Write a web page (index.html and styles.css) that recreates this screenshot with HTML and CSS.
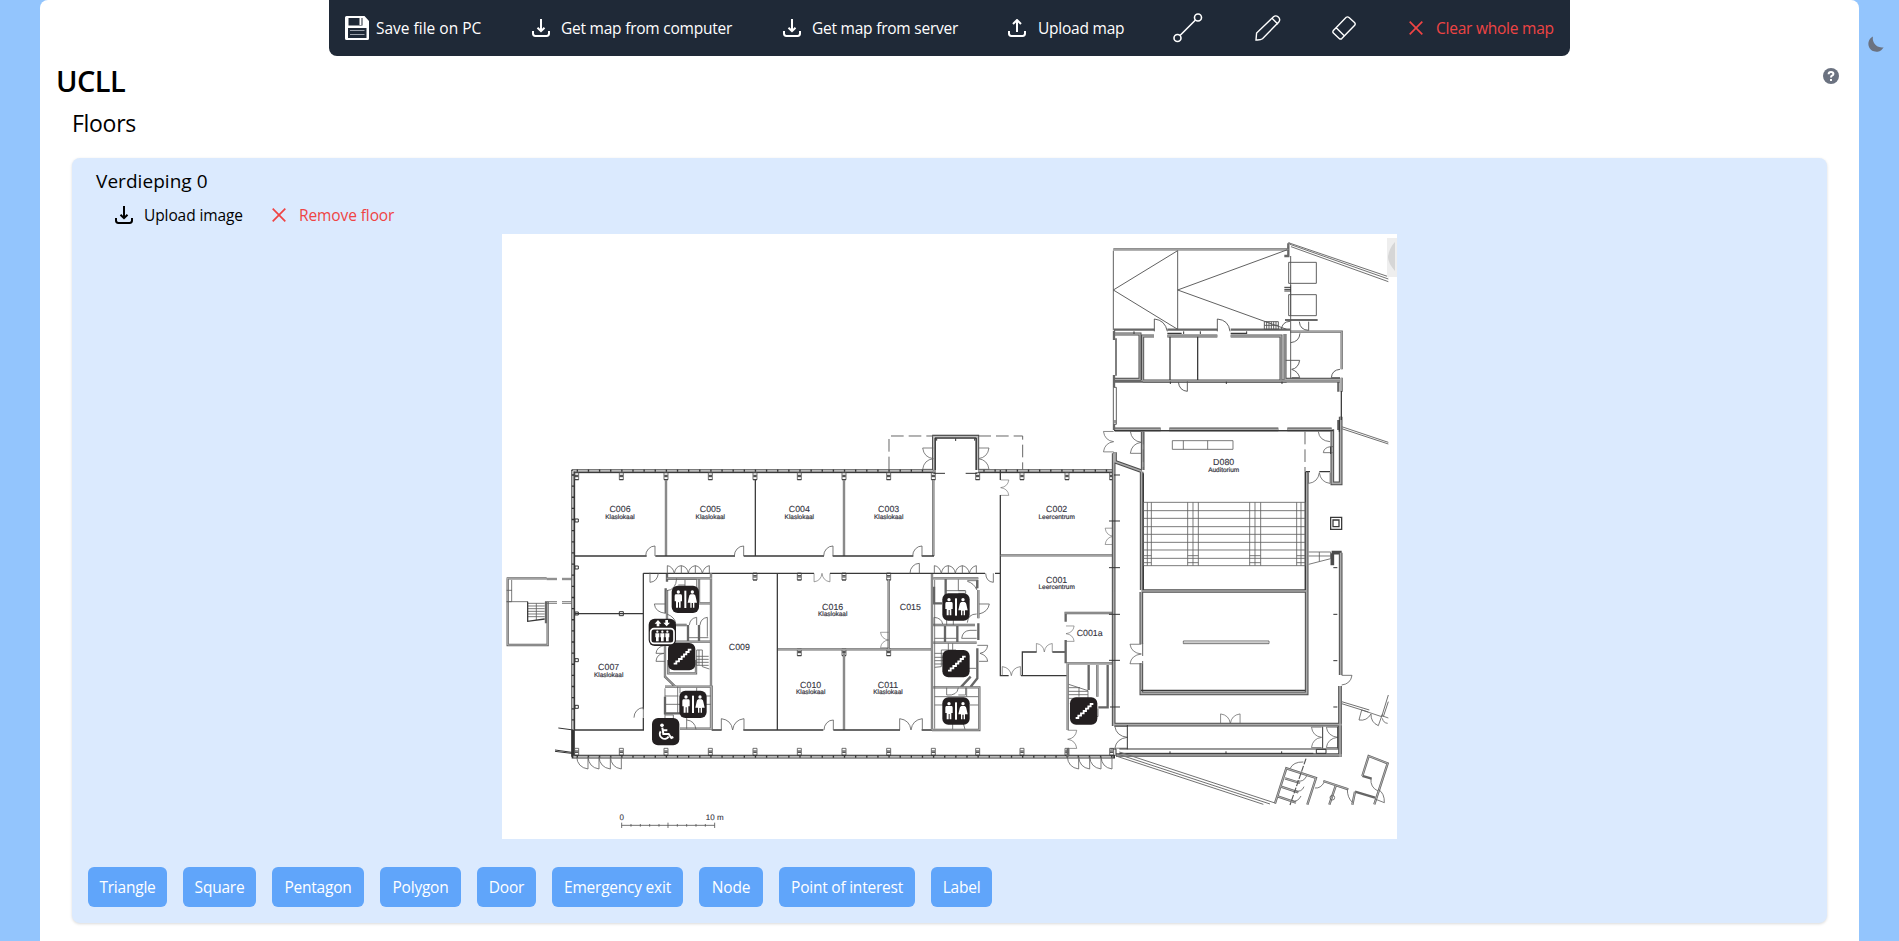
FILE: index.html
```html
<!DOCTYPE html>
<html lang="en">
<head>
<meta charset="utf-8">
<title>UCLL</title>
<link rel="stylesheet" href="styles.css">
</head>
<body>
<svg class="sprite" aria-hidden="true">
  <symbol id="download" viewBox="0 0 18 18"><path d="M9 0v12M5.500 8.700L9 12.200l3.500-3.500M1 12v2.600Q1 17 3.400 17h11.200q2.400 0 2.400-2.400V12"/></symbol>
  <symbol id="upload" viewBox="0 0 18 18"><path d="M9 13V1M5 5l4-4 4 4M1 12v2.600Q1 17 3.400 17h11.200q2.400 0 2.400-2.400V12"/></symbol>
  <symbol id="cross" viewBox="0 0 14 14"><path d="M.7.700l12.600 12.600M13.300.700L.7 13.300"/></symbol>
</svg>
<div class="page">
  <header class="toolbar">
    <button class="tool save"><svg class="disk" viewBox="0 0 24 24"><path fill="#fff" fill-rule="evenodd" d="M1.500 0H19.500L24 5V22.500Q24 24 22.500 24H1.500Q0 24 0 22.500V1.500Q0 0 1.500 0ZM3.500 2V9.500H17.500V2ZM3 12V22H21.500V12Z"/><path fill="#fff" d="M14.500 2h2v7h-2z"/><path stroke="#9ba1ab" stroke-width="1.200" d="M5 14.500h14.500M5 18.500h14.500"/></svg><span>Save file on PC</span></button>
    <button class="tool computer"><svg class="arrow"><use href="#download"/></svg><span>Get map from computer</span></button>
    <button class="tool server"><svg class="arrow"><use href="#download"/></svg><span>Get map from server</span></button>
    <button class="tool upload"><svg class="arrow"><use href="#upload"/></svg><span>Upload map</span></button>
    <button class="tool draw-line" aria-label="Line"><svg class="line-icon" viewBox="0 0 30 30"><circle cx="4.500" cy="25" r="3.500"/><circle cx="25" cy="4.500" r="3.500"/><path d="M7 22.500L22.500 7"/></svg></button>
    <button class="tool pencil" aria-label="Pencil"><svg class="pencil-icon" viewBox="0 0 26 26"><path d="M1 25l.6-7L18.500 1.800q2.300-2 4.800.3t.5 5L7.500 23.800Q5.500 25.300 1 25zM17 3.200l6 6"/></svg></button>
    <button class="tool eraser" aria-label="Eraser"><svg class="eraser-icon" viewBox="0 0 24 24"><path d="M14.200 1.300q1.400-1 2.800.2l5.500 5q1.300 1.300.2 2.800L9.800 22.600q-1.300 1-2.600-.2l-5.800-5.300q-1.100-1.300 0-2.700zM4.200 11.800l7.800 7.800"/></svg></button>
    <button class="tool clear"><svg class="cross"><use href="#cross"/></svg><span>Clear whole map</span></button>
  </header>
  <button class="theme" aria-label="Dark mode"><svg viewBox="0 0 16 16"><path d="M5 .5A9 9 0 0 0 15.600 11.200 8 8 0 1 1 5 .5z"/></svg></button>
  <main class="panel">
    <div class="title-row">
      <h1>UCLL</h1>
      <svg class="help" viewBox="0 0 16 16"><circle cx="8" cy="8" r="8" fill="#6b7280"/><path fill="none" stroke="#fff" stroke-width="2" d="M5.600 6.200Q5.700 4 8 4t2.400 1.900Q10.400 7 9 7.700 8 8.200 8 9.500"/><path fill="#fff" d="M7 11h2v2H7z"/></svg>
    </div>
    <h2>Floors</h2>
    <section class="floor">
      <h3>Verdieping 0</h3>
      <div class="floor-actions">
        <button class="action"><svg class="arrow"><use href="#download"/></svg><span>Upload image</span></button>
        <button class="action remove"><svg class="cross"><use href="#cross"/></svg><span>Remove floor</span></button>
      </div>
      <svg class="plan" viewBox="502 234 895 605">
        <defs>
          <g id="col"><path class="gray" d="M-6 0h12v21h-12z"/><path class="dark" d="M-5 8H5M-5 12H5M-6 21H6"/></g>
          <path id="door" class="fine" d="M0 0V-30A28 30 0 0 0 -28 0"/>
          <path id="pair" class="fine" d="M-34 0V-34Q-4-30 0 0Q4-30 34-34V0"/>
          <path id="arcs" class="fine" d="M0 0V-23Q16-21 21 0Q25-22 42-23Q60-20 63 0Q66-20 84-23Q101-20 105 0Q110-20 126-23V0M42-23V0M84-23V0"/>
          <path id="outdoors" class="fine" d="M0 0Q2 32 34 37V0Q36 32 67 37V0Q69 32 101 37V0Q103 32 134 37V0"/>
          <g id="badge"><rect x="-41" y="-41" width="82" height="82" rx="18" fill="#231f20"/></g>
          <g id="wc"><use href="#badge"/><g fill="#fff"><path d="M-3-26h6v52h-6z"/><circle cx="-21" cy="-22" r="5"/><path d="M-29-15h16q3 1 3 5V6h-4V25h-5V9h-3V25h-6V6h-4V-10q0-4 3-5z"/><circle cx="21" cy="-22" r="5"/><path d="M16-15h10q5 2 5 7l4 18h-8v15h-4V11h-4V25h-4V10H7l4-18q0-5 5-7z"/></g></g>
          <g id="stairs"><use href="#badge"/><path d="M-24 21h8v-7h8V7h8V0h7V-7h7v-7h7v-7h8" fill="none" stroke="#fff" stroke-width="5.500"/></g>
        </defs>
        <g transform="translate(500 420) scale(.33333)">
          <!-- outer walls of block C -->
          <path class="facade" d="M215 153H1300M1435 153H1842M219 150V1010M215 1010H1845"/>
          <path class="fill" d="M218 152H1300M1435 152H1842M218 153V930M220 1010H1840"/>
          <path class="ticks" d="M230 152H1300M1450 152H1840M219 163V920M230 1010H1840"/>
          <path class="dark" d="M224 155V930M222 158H1300M1435 158H1842"/>
          <g>
            <use href="#col" x="230" y="158"/><use href="#col" x="364" y="158"/><use href="#col" x="498" y="158"/><use href="#col" x="631" y="158"/><use href="#col" x="765" y="158"/><use href="#col" x="898" y="158"/><use href="#col" x="1032" y="158"/><use href="#col" x="1166" y="158"/><use href="#col" x="1300" y="158"/><use href="#col" x="1433" y="158"/><use href="#col" x="1566" y="158"/><use href="#col" x="1701" y="158"/><use href="#col" x="1835" y="158"/>
            <use href="#col" x="230" y="985"/><use href="#col" x="364" y="985"/><use href="#col" x="498" y="985"/><use href="#col" x="631" y="985"/><use href="#col" x="765" y="985"/><use href="#col" x="898" y="985"/><use href="#col" x="1032" y="985"/><use href="#col" x="1166" y="985"/><use href="#col" x="1300" y="985"/><use href="#col" x="1433" y="985"/><use href="#col" x="1566" y="985"/><use href="#col" x="1701" y="985"/><use href="#col" x="1835" y="985"/>
            <use href="#col" x="765" y="459"/><use href="#col" x="898" y="459"/><use href="#col" x="1032" y="459"/><use href="#col" x="1166" y="459"/><use href="#col" x="898" y="686"/><use href="#col" x="1032" y="686"/><use href="#col" x="1166" y="686"/>
          </g>
          <path class="dark" d="M225 297h10v9h-10zM225 438h10v9h-10zM225 576h10v9h-10zM225 716h10v9h-10zM225 856h10v9h-10zM358 575h12v12h-12z"/>
          <!-- rooms -->
          <path class="wall" d="M498 180V408M1032 180V408M1300 180V408M832 688H1295M1032 700V930M1166 478V688"/>
          <path class="wallfill" d="M498 180V408M1032 180V408M1300 180V408M832 688H1295M1032 700V930M1166 478V688"/>
          <path class="wall2" d="M766 180V408M222 408H440M466 408H705M731 408H972M998 408H1240M1265 408H1302M222 581H430M222 930H432M635 930H665M730 930H970M1000 930H1200M1265 930H1438M430 460H942M990 460H1455M1485 460H1500M832 460V930M430 460V868M430 893V930M1501 150V180M1501 225V767H1526M1563 767H1700M1567 767V696H1610M1657 696H1697"/>
          <path class="wall" d="M1502 406H1840"/><path class="wallfill" d="M1502 406H1840"/>
          <use href="#door" x="465" y="408"/><use href="#door" x="731" y="408"/><use href="#door" x="999" y="408"/><use href="#door" x="1266" y="408"/><use href="#door" x="1258" y="460"/><use href="#door" x="1000" y="930"/><use href="#door" x="430" y="893"/>
          <use href="#pair" transform="translate(698 930)"/><use href="#pair" transform="translate(1233 930)"/>
          <use href="#pair" transform="translate(966 460) scale(.7 -.75)"/><use href="#pair" transform="translate(1534 767) scale(.8)"/><use href="#pair" transform="translate(1633 696) scale(.7 .75)"/>
          <use href="#pair" transform="translate(1502 203) rotate(90) scale(.68 .72)"/><use href="#pair" transform="translate(1166 660) rotate(-90) scale(.68 .72)"/>
          <use href="#pair" transform="translate(1840 349) rotate(-90) scale(.72)"/>
          <path class="fine" d="M450 458V487Q472 485 475 460M1457 460Q1458 485 1480 487V460"/>
          <use href="#arcs" x="502" y="460"/><use href="#arcs" x="1303" y="460"/>
          <use href="#outdoors" x="230" y="1010"/><use href="#outdoors" x="1702" y="1010"/>
          <!-- entrance -->
          <path class="facade" d="M1302 150V50H1432V150"/><path class="fill" d="M1302 150V50H1432V150"/>
          <path class="dark" d="M1305 158V54H1429V150M1310 55v7M1367 55v8M1424 55v7M1300 160H1335M1397 160H1432"/>
          <path class="dash" d="M1167 148V48H1300M1435 48H1568V150"/>
          <use href="#pair" transform="translate(1300 116) rotate(-90) scale(.94)"/><use href="#pair" transform="translate(1435 116) rotate(90) scale(.94)"/>
          <!-- left annex -->
          <path class="wall" d="M20 475H140M23 475V675H143V545M138 545V610"/><path class="wallfill" d="M20 475H140M23 475V675H143V545"/>
          <path class="fine" d="M35 480V545H20M20 511H36M140 475H171M140 479H171M186 475H215M186 479H215M135 545H171M135 550H171M186 545H215M186 550H215M84 550H134M84 558H134M84 566H134M84 574H134M84 582H134M84 590H134M109 550V600M20 545H84"/>
          <path class="wall2" d="M83 545V604L134 597"/>
          <path class="dark" d="M175 924L220 930M165 990L222 998M165 994L222 1001M217 930V1010"/>
          <!-- left service core -->
          <path class="wall" d="M500 475H635M633 460V930M501 462V485M497 505V580M501 510V615H560M597 478V550H630M501 665H630M495 800H635V926H540M495 830V880H540M495 640V770L528 802M505 720V760H588V720M564 615V665M597 615V665"/>
          <path class="wallfill" d="M500 475H635M633 460V930M501 510V615H560M597 478V550H630M501 665H630M495 800H635V926H540M495 640V770L528 802M505 720V760H588V720"/>
          <path class="fine" d="M495 805V926M533 800V880M495 828H535M495 853H540M560 850V926M500 478H590V550M555 480V520M530 475Q528 510 500 512M535 495H555M497 552H463Q466 577 497 580M501 582Q525 592 527 610M568 615Q570 595 590 592V615M600 615Q602 595 622 592V650M565 653H597M600 653H625M590 690V735M597 690V735M588 709H626M588 718H626M588 727H626M588 736H626M607 690V740L628 747M590 690H607M495 676Q470 680 468 700H492M495 724H468Q470 702 492 700M495 885H520V900M560 900Q584 902 588 928M540 803V820M590 803V820M600 828H632M600 853H632"/>
          <!-- right service core -->
          <path class="wall" d="M1296 462V930M1300 475H1435M1302 500V550H1326M1300 615H1425M1300 668H1430M1337 478V550M1300 802H1438V930H1296M1412 770L1382 802M1432 480V505M1435 510V595M1435 610V660M1432 685V775L1412 800M1372 615V668M1335 615V668"/>
          <path class="wallfill" d="M1296 462V930M1300 475H1435M1300 615H1425M1300 668H1430M1300 802H1438V930H1296M1435 510V595"/>
          <path class="fine" d="M1304 480V926M1337 512H1395M1375 478V512H1397V520H1375M1402 484Q1422 490 1430 509V482H1402M1437 552H1468Q1464 576 1437 582M1302 616V592Q1325 594 1328 612M1340 615V597H1360V615M1402 608Q1404 582 1430 582M1304 655H1370M1430 655H1385Q1388 632 1410 631H1430M1432 676H1463Q1461 696 1440 700Q1461 706 1463 724H1437M1304 700H1328M1304 712H1328M1304 722H1328M1304 732H1328M1304 742L1324 740V690H1368M1345 670V690M1358 670V690M1405 745H1428M1375 803Q1372 828 1340 825V803M1375 825H1397V803M1304 830H1435M1304 855H1345M1410 855H1435M1358 910V928M1390 910L1395 928M1400 803V830"/>
          <!-- stair hall and C001a -->
          <path class="wall" d="M1697 575V605M1697 660V730M1695 579H1840M1700 730H1840M1703 730V930M1703 985V1010M1766 735V810M1792 735V830M1823 735V862H1795"/>
          <path class="wallfill" d="M1695 579H1840M1700 730H1840M1703 730V930M1792 735V830"/>
          <use href="#pair" transform="translate(1698 641) rotate(90) scale(.68 .72)"/><use href="#pair" transform="translate(1703 958) rotate(90) scale(.8)"/>
          <path class="fine" d="M1706 793L1764 812V835H1706M1706 803H1740M1706 814H1764M1706 824H1764M1737 802V830M1794 890Q1776 890 1774 866M1794 866V890"/>
        </g>
        <!-- block D: auditorium -->
        <g transform="translate(1040 420) scale(.33333)">
          <path class="heavy" d="M221 100V918M222 914H905M305 155V510M308 35V150M304 516V672M304 730V820H800V155M305 513H800M225 28H362M388 28H715M742 28H875M877 28V190H902V-10M902 398V765M875 398H905M877 400V436M900 798V1010M228 1005H905M225 97V125L305 154"/>
          <path class="heavyfill" d="M221 100V918M222 914H905M305 155V510M308 35V150M304 516V672M304 730V820H800V155M305 513H800M225 28H362M388 28H715M742 28H875M877 28V190H902V-10M902 398V765M900 798V1010M228 1005H905M225 97V125L305 154"/>
          <path class="wall2" d="M225 32H880M310 160V510M796 155V510M303 811H796M872 292H905V328H872zM879 300H897V320H879zM797 155H810M838 155H870"/>
          <path class="gray" d="M430 663H687V671H430z"/><path class="wallfill" d="M431 667H686"/>
          <path class="fine" d="M397 62H579V88H397zM430 62V88M503 62V88M310 247H796V437H310zM310 272H796M310 295H796M310 320H796M310 343H796M310 367H796M310 390H796M310 415H796M322 247V437M334 247V437M443 247V437M459 247V437M475 247V437M629 247V437M645 247V437M662 247V437M770 247V437M783 247V437M310 407H334M443 407H475M629 407H662M770 407H796M310 428H334M443 428H475M629 428H662M770 428H796M806 396H872V416L806 433M838 396V424M806 408H872"/>
          <path class="dash" d="M310 35V150M795 35V155M308 670V730"/>
          <use href="#pair" transform="translate(221 65) rotate(-90) scale(.9)"/><use href="#pair" transform="translate(304 67) rotate(-90) scale(.97)"/><use href="#pair" transform="translate(304 702) rotate(-90) scale(.86 1)"/><use href="#pair" transform="translate(838 158) scale(.95 -.95)"/><use href="#pair" transform="translate(571 911) scale(.86)"/>
          <use href="#pair" transform="translate(262 952) rotate(-90) scale(.96 1.100)"/><use href="#pair" transform="translate(845 952) rotate(-90) scale(.9)"/><use href="#pair" transform="translate(893 952) rotate(-90) scale(.9 1)"/>
          <path class="fine" d="M835 35Q838 62 870 65M880 80H872Q852 82 850 98H878M905 766H936Q932 792 905 795"/>
          <path class="dark" d="M222 165H240M207 303H240M207 443H240M207 583H240M207 721H240M210 861H240M880 443H892M880 583H892M880 722H892M880 861H892M225 10V0M262 915V988M848 920V985M893 920V985M238 987H895M238 1000H820M829 988H858V1000H829zM390 994V1002M558 994V1002M725 994V1002M211 987H228V1008M872 80V102"/>
          <path class="thin" d="M905 20L1045 67M905 26L1045 72M238 996L708 1150M232 1002L690 1152M228 1008L670 1153M905 845L988 870M905 851L985 876M1045 825L1025 890M1045 845L1030 890"/>
          <path class="wall" d="M967 1068L986 1008L1043 1030L1003 1153M967 1068L995 1076M705 1150L739 1045L828 1074L802 1154M850 1083L925 1108M945 1115L1005 1133M887 1098L868 1154M945 1115L937 1154M735 1075L780 1089M723 1100L775 1117M713 1129L768 1148"/>
          <path class="wallfill" d="M967 1068L986 1008L1043 1030L1003 1153M705 1150L739 1045L828 1074L802 1154M850 1083L925 1108M887 1098L868 1154M945 1115L937 1154M735 1075L780 1089M723 1100L775 1117M713 1129L768 1148"/>
          <path class="dashline" d="M798 1016L750 1155"/>
          <path class="fine" d="M750 1046Q760 1025 790 1026M800 1068Q790 1088 772 1082M792 1100Q785 1118 765 1112M783 1128Q773 1148 755 1142M853 1086Q842 1106 825 1104M922 1108Q922 1133 937 1147M965 870L957 900Q980 904 993 882Q992 907 1015 917L1027 883M1025 887L1045 894M1043 910Q1030 909 1027 895M993 1075Q990 1102 1014 1113M1015 1108Q1034 1120 1033 1148L1005 1137M965 870L1025 890"/>
          <circle class="fine" cx="877" cy="1133" r="7"/>
        </g>
        <!-- block D: north rooms -->
        <g transform="translate(1090 230) scale(.33333)">
          <path class="wall" d="M70 58H595M595 40V78H583M72 299H193M232 299H382M422 299H600M600 305H755V418M755 443V485M745 452V485M745 570V600M72 302V330M72 435V455H590M72 455V472M72 583V600"/>
          <path class="wallfill" d="M70 58H595M600 305H755V418M755 443V485"/>
          <path class="heavy slim" d="M75 312H150V448H75M192 318H158V450M232 318H382M422 318H573V450M585 312V448H750M158 453H750"/>
          <path class="heavyfill slim" d="M75 312H150V448H75M192 318H158V450M232 318H382M422 318H573V450M585 312V448H750M158 453H750"/>
          <path class="wall2" d="M78 325V437M240 320V450M323 320V450M754 483V570M748 570V605M72 602H720M585 270H683M232 310H275M422 310H470"/>
          <path class="fine ramp" d="M70 62V300M263 62V298L70 180L263 62M590 60L263 180L590 298M602 78V445M596 97H679V160H596zM596 194H679V257H596zM602 165V257M70 472H79V583H70zM523 275H565V298H523zM530 275V298M537 275V298M544 275V298M551 275V298M558 275V298M523 286H565M193 304V267Q225 270 232 304M382 304V267Q416 270 420 304M265 456Q268 482 292 484V454M602 338Q628 335 630 310M587 391H629Q625 415 605 418Q625 425 629 443H605M750 418Q726 420 724 443H750M628 275Q630 300 656 301V275M574 298Q577 275 600 274"/>
          <path class="dark" d="M583 172H603M583 178H603M583 183H603M132 304v8M281 304v8M331 304v8M470 304v8M241 455v7M409 455v7M576 455v7"/>
          <path class="thin" d="M595 38L895 140M600 43L895 147M603 50L895 155M590 62L598 38"/>
        </g>
        <path class="plan-handle" d="M1387 238H1397V277H1387z"/><path class="plan-arrow" d="M1395 242V271Q1388 263 1388 257Q1389 248 1395 242z"/>
        <g transform="translate(500 420) scale(.33333)">
          <g class="room"><text x="360" y="277">C006</text><text x="631" y="277">C005</text><text x="898" y="277">C004</text><text x="1166" y="277">C003</text><text x="1670" y="277">C002</text><text x="1670" y="489">C001</text><text x="1769" y="649">C001a</text><text x="326" y="751">C007</text><text x="718" y="690">C009</text><text x="998" y="570">C016</text><text x="1231" y="570">C015</text><text x="932" y="804">C010</text><text x="1164" y="804">C011</text><text x="2171" y="136">D080</text></g>
          <g class="kind"><text x="360" y="296">Klaslokaal</text><text x="631" y="296">Klaslokaal</text><text x="898" y="296">Klaslokaal</text><text x="1166" y="296">Klaslokaal</text><text x="1670" y="296">Leercentrum</text><text x="1670" y="508">Leercentrum</text><text x="326" y="770">Klaslokaal</text><text x="998" y="589">Klaslokaal</text><text x="932" y="823">Klaslokaal</text><text x="1164" y="823">Klaslokaal</text><text x="2171" y="155">Auditorium</text></g>
          <g class="scale"><text x="365" y="1201">0</text><text x="644" y="1201">10 m</text></g>
          <path class="gray" d="M365 1216H644M365 1208V1224M504 1208V1224M644 1208V1224M393 1212V1220M421 1212V1220M449 1212V1220M477 1212V1220M532 1212V1220M560 1212V1220M588 1212V1220M616 1212V1220"/>
          <use href="#wc" x="556" y="538"/><use href="#wc" x="579" y="853"/><use href="#wc" x="1368" y="561"/><use href="#wc" x="1368" y="873"/>
          <use href="#stairs" x="545" y="710"/><use href="#stairs" x="1368" y="731"/><use href="#stairs" x="1751" y="873"/>
          <g transform="translate(487 637)"><use href="#badge"/><rect x="-35" y="-11" width="70" height="44" rx="10" fill="none" stroke="#fff" stroke-width="5"/><path fill="#fff" d="M-13-37l10 11h-6v8h-8v-8h-6zM13-18L3-29h6v-8h8v8h6z"/><g fill="#fff"><circle cx="-15" cy="-2" r="3.500"/><circle cy="-2" r="3.500"/><circle cx="15" cy="-2" r="3.500"/><path d="M-21 3h12v12h-2v12h-8V15h-2zM-6 3H6v12H4v12h-8V15h-2zM9 3h12v12h-2v12h-8V15H9z"/></g></g>
          <g transform="translate(497 935)"><use href="#badge"/><circle cx="-11" cy="-19" r="5.500" fill="#fff"/><path fill="none" stroke="#fff" stroke-width="6" d="M-10-12L-7 7H9L17 19L23 16M-9-4H5M-15-1A14 14 0 1 0 9 15"/></g>
        </g>
      </svg>
      <div class="shapes">
        <button style="width:79px">Triangle</button><button style="width:73px">Square</button><button style="width:92px">Pentagon</button><button style="width:81px">Polygon</button><button style="width:59px">Door</button><button style="width:131px">Emergency exit</button><button style="width:64px">Node</button><button style="width:136px">Point of interest</button><button style="width:61px">Label</button>
      </div>
    </section>
  </main>
</div>
</body>
</html>
```
FILE: styles.css
```css
* { box-sizing: border-box; }
html, body { margin: 0; height: 100%; overflow: hidden; }
body { background: #93c5fd; font: 15.5px/24px "Segoe UI", "Open Sans", "Noto Sans", sans-serif; color: #000; }
h1, h2, h3 { margin: 0; font-weight: 400; }
button { border: 0; padding: 0; background: none; color: inherit; font: inherit; letter-spacing: -.23px; white-space: nowrap; }
svg { display: block; flex: none; }
.sprite { position: absolute; width: 0; height: 0; }
.page { position: relative; height: 941px; padding: 0 40px; }
.panel { height: 100%; padding: 62px 32px 0; background: #fff; border-radius: 8px 8px 0 0; }
.toolbar { position: absolute; z-index: 2; top: 0; left: 329px; width: 1241px; height: 56px; padding-left: 16px; display: flex; background: #1f2937; color: #fff; border-radius: 0 0 8px 8px; }
.tool { display: flex; align-items: center; }
.save { width: 187px; gap: 7px; letter-spacing: 0; }
.computer { width: 251px; gap: 11px; }
.server { width: 225px; gap: 11px; }
.upload { width: 165px; gap: 12px; }
.draw-line { width: 82px; }
.pencil { width: 77px; }
.eraser { width: 77px; }
.clear { gap: 13px; color: #ef4444; }
.disk, .eraser-icon { width: 24px; height: 24px; }
.arrow { width: 18px; height: 18px; fill: none; stroke: currentColor; stroke-width: 2; }
.cross { width: 14px; height: 14px; fill: none; stroke: currentColor; stroke-width: 1.7; }
.line-icon { width: 30px; height: 30px; fill: none; stroke: #fff; stroke-width: 1.6; }
.pencil-icon { width: 26px; height: 26px; }
.pencil-icon, .eraser-icon { fill: none; stroke: #fff; stroke-width: 1.4; }
.theme { position: absolute; left: 1868px; top: 36px; }
.theme svg { width: 16px; height: 16px; fill: #6b7280; }
.title-row { display: flex; justify-content: space-between; height: 40px; margin: 0 -12px 0 -16px; }
.help { width: 16px; height: 16px; margin-top: 6px; }
h1 { font-size: 29px; line-height: 38px; font-weight: 600; letter-spacing: -.6px; }
h2 { height: 56px; font-size: 23px; line-height: 42px; letter-spacing: -.3px; }
.floor { height: 765px; padding: 8px 16px 0; background: #dbeafe; border-radius: 8px; box-shadow: 0 1px 3px rgb(0 0 0 / .15); }
h3 { padding-left: 8px; height: 32px; font-size: 19px; line-height: 30px; letter-spacing: .05px; }
.floor-actions { display: flex; height: 36px; padding-left: 27px; }
.action { display: flex; align-items: center; width: 157px; height: 33px; gap: 11px; letter-spacing: -.1px; }
.remove { gap: 13px; color: #ef4444; }
.plan { width: 895px; height: 605px; margin: 0 auto; background: #fff; }
.shapes { display: flex; gap: 16px; margin-top: 28px; }
.shapes button { height: 40px; border-radius: 6px; background: #60a5fa; color: #fff; text-align: center; }
.plan path, .plan .fine { fill: none; }
.plan [fill="#fff"] path, .plan path[fill="#fff"] { fill: #fff; }
.facade { stroke: #333; stroke-width: 11; }
.fill { stroke: #bbb; stroke-width: 6; }
.ticks { stroke: #333; stroke-width: 7; stroke-dasharray: 4 29.4; }
.wall { stroke: #666; stroke-width: 7; }
.wallfill { stroke: #bbb; stroke-width: 2.6; }
.wall2 { stroke: #383838; stroke-width: 3.8; }
.heavy { stroke: #4c4c4c; stroke-width: 11; }
.heavyfill { stroke: #aaa; stroke-width: 5; }
.heavy.slim { stroke-width: 9; }
.heavyfill.slim { stroke-width: 3.8; }
.dark { stroke: #333; stroke-width: 3; }
.gray { stroke: #555; stroke-width: 2.5; }
.fine { stroke: #606060; stroke-width: 2.5; }
.fine.ramp { stroke: #555; stroke-width: 2.8; }
.thin { stroke: #707070; stroke-width: 3; }
.dash { stroke: #666; stroke-width: 3; stroke-dasharray: 38 15; }
.dashline { stroke: #555; stroke-width: 3.5; stroke-dasharray: 18 5; }
.plan .plan-handle { fill: #eee; }
.plan .plan-arrow { fill: #d6d6d6; }
.room, .kind, .scale { font-family: "Liberation Sans", Arial, sans-serif; text-anchor: middle; text-rendering: geometricPrecision; fill: #33333d; }
.room { font-size: 26.5px; stroke: #33333d; stroke-width: .3; }
.kind { font-size: 19.4px; stroke: #33333d; stroke-width: .6; }
.scale { font-size: 24px; stroke: #33333d; stroke-width: .3; }
```
